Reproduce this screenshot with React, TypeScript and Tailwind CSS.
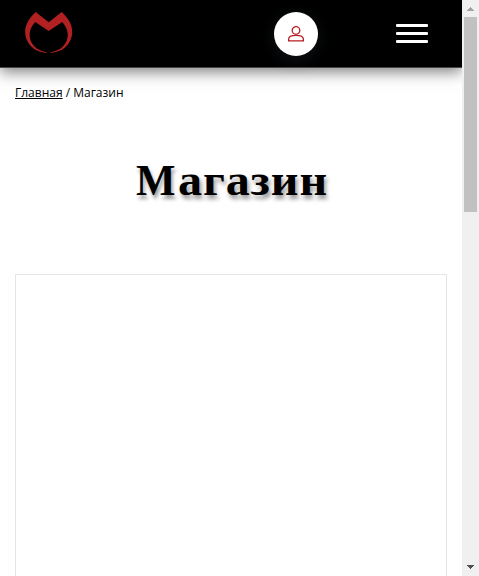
function Logo() {
  return (
    <svg width="48" height="42" viewBox="0 0 48 42" fill="#b22122" aria-label="Logo">
      <path d="M10.7 0 C3.5 7 0 13 0.2 20.5 C0.6 31.5 9.5 40.6 22 40.8 L22 40.3 C12 39.3 4.6 31.5 4.6 23 C4.6 18 6.6 14 10.2 10 L23.7 19 L37.2 10 C40.8 14 42.8 18 42.8 23 C42.8 31.5 35.4 39.3 25.4 40.3 L25.4 40.8 C37.9 40.6 46.8 31.5 47.2 20.5 C47.4 13 43.9 7 36.7 0 L23.7 10.3 Z" />
    </svg>
  );
}

function UserIcon() {
  return (
    <svg width="16" height="16" viewBox="0 0 16 16" fill="none" stroke="#b51f24" strokeWidth="1.3">
      <circle cx="8" cy="4.4" r="3.8" />
      <path d="M.65 14.9V13C.65 10.6 3.3 9.4 8 9.4s7.35 1.2 7.35 3.6v1.9Z" />
    </svg>
  );
}

function Header() {
  return (
    <header className="flex h-[68px] items-start border-b border-[#4b4547] bg-black pt-3 pl-[25px] shadow-[0_4px_14px_rgba(0,0,0,0.5)]">
      <Logo />
      <button className="ml-[201px] flex size-11 items-center justify-center rounded-full bg-white shadow-[0_4px_16px_rgba(60,80,90,0.25)]">
        <UserIcon />
      </button>
      <button className="mt-3 ml-[78px] flex w-8 flex-col gap-[5px]" aria-label="Menu">
        <span className="h-[3px] w-8 rounded-[1px] bg-white" />
        <span className="h-[3px] w-8 rounded-[1px] bg-white" />
        <span className="h-[3px] w-8 rounded-[1px] bg-white" />
      </button>
    </header>
  );
}

function Scrollbar() {
  return (
    <div className="z-10 flex w-[17px] shrink-0 flex-col items-center bg-[#f0f0f0]">
      <svg className="h-[17px] w-[17px] shrink-0" viewBox="0 0 17 17" fill="#a3a3a3" shapeRendering="crispEdges">
        <path d="M8 7h1v1h1v1h1v1h1v1H5v-1h1V9h1V8h1Z" />
      </svg>
      <div className="h-[195px] w-[13px] bg-[#c1c1c1]" />
      <svg className="mt-auto h-[17px] w-[17px] shrink-0" viewBox="0 0 17 17" fill="#505050" shapeRendering="crispEdges">
        <path d="M5 6h7v1h-1v1h-1v1H9v1H8V9H7V8H6V7H5Z" />
      </svg>
    </div>
  );
}

export default function App() {
  return (
    <div className="flex h-[576px] w-[479px] overflow-hidden bg-white text-black">
      <div className="flex min-w-0 flex-1 flex-col overflow-hidden">
        <Header />
        <nav className="mt-4 ml-[15px] h-[18px] font-['Open_Sans',sans-serif] text-[12px] leading-[18px] whitespace-nowrap">
          <a className="underline" href="#">Главная</a> / Магазин
        </nav>
        <h1 className="mt-[49px] h-[60px] pl-[136px] font-['Liberation_Serif',serif] text-[45px] leading-[58px] font-bold whitespace-nowrap [text-shadow:2px_4px_4px_rgba(0,0,0,0.4)]">
          <span className="inline-block w-[42px] origin-left scale-x-[0.93]">М</span><span className="inline-block origin-left scale-x-[1.07] tracking-[0.8px]">агазин</span>
        </h1>
        <main className="mx-[15px] mt-[63px] flex-1 border border-b-0 border-[#e5e5e5]" />
      </div>
      <Scrollbar />
    </div>
  );
}
